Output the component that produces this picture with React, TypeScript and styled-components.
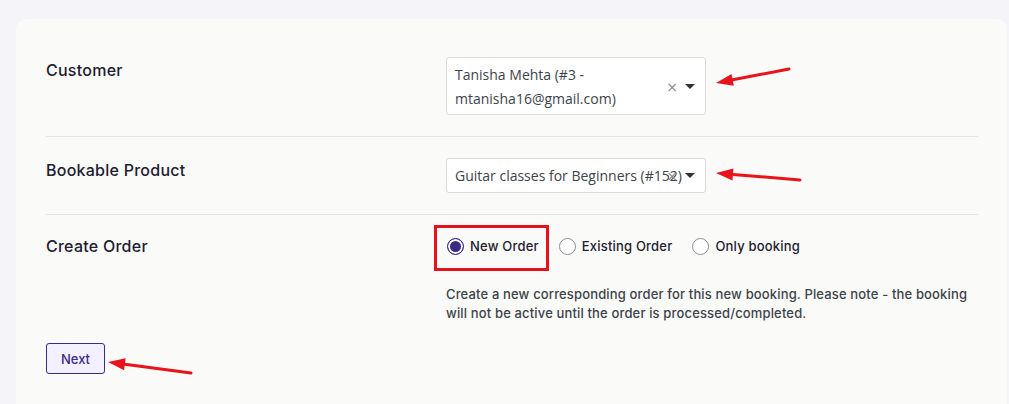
import React from 'react';
import styled, { createGlobalStyle } from 'styled-components';

const GlobalStyle = createGlobalStyle`
  html, body {
    margin: 0;
    padding: 0;
    background: #f4f4f9;
    font-family: Inter, "Noto Sans", sans-serif;
  }
`;

const Page = styled.div`
  position: relative;
  width: 1009px;
  height: 404px;
  overflow: hidden;
  padding: 19px 2px 0 16px;
  box-sizing: border-box;
`;

const Card = styled.div`
  position: relative;
  background: #fafaf9;
  border-radius: 10px 10px 0 0;
  padding: 38px 29px 40px 30px;
  min-height: 420px;
  box-sizing: border-box;
`;

const Row = styled.div<{ $last?: boolean; $top?: number; $bottom?: number }>`
  display: grid;
  grid-template-columns: 400px 1fr;
  padding: ${p => p.$top ?? 21}px 0 ${p => p.$bottom ?? 21}px;
  border-bottom: ${p => (p.$last ? 'none' : '1px solid #e4e4e4')};
`;

const Label = styled.div<{ $offset?: number }>`
  font-size: 16px;
  font-weight: 500;
  line-height: 24px;
  letter-spacing: 0.25px;
  color: #1d2030;
  padding-top: ${p => p.$offset ?? 0}px;
`;

const Field = styled.div`
  display: flex;
  flex-direction: column;
`;

const Select = styled.div<{ $height: number }>`
  position: relative;
  width: 260px;
  height: ${p => p.$height}px;
  box-sizing: border-box;
  background: #ffffff;
  border: 1px solid #dcdcde;
  border-radius: 3px;
  padding: 5px 40px 0 8px;
  font-family: "Open Sans", "Noto Sans", sans-serif;
  font-size: 14px;
  line-height: 24px;
  color: #3c434a;
  white-space: nowrap;
`;

const SelectText = styled.div`
  overflow: visible;
`;

const Clear = styled.span<{ $top: number }>`
  position: absolute;
  right: 27px;
  top: ${p => p.$top}px;
  font-family: "DejaVu Sans", sans-serif;
  font-size: 14px;
  line-height: 14px;
  color: #888;
`;

const Caret = styled.span<{ $top: number }>`
  position: absolute;
  right: 10px;
  top: ${p => p.$top}px;
  width: 0;
  height: 0;
  border-left: 5px solid transparent;
  border-right: 5px solid transparent;
  border-top: 5px solid #333;
`;

const Radios = styled.div`
  position: relative;
  display: flex;
  align-items: center;
  gap: 20px;
  height: 24px;
  padding-left: 1px;
`;

const RadioOption = styled.label`
  display: flex;
  align-items: center;
  gap: 6px;
  font-size: 13px;
  font-weight: 500;
  letter-spacing: 0.2px;
  color: #1d2030;
`;

const RadioCircle = styled.span<{ $checked?: boolean }>`
  width: 17px;
  height: 17px;
  box-sizing: border-box;
  border-radius: 50%;
  border: 1px solid ${p => (p.$checked ? '#3b2a86' : '#8c8f94')};
  background: ${p => (p.$checked ? '#3b2a86' : '#fff')};
  box-shadow: ${p => (p.$checked ? 'inset 0 0 0 2px #fff' : 'none')};
`;

const Highlight = styled.div`
  position: absolute;
  left: -12px;
  top: -9px;
  width: 115px;
  height: 46px;
  box-sizing: border-box;
  border: 3px solid #e5141c;
`;

const Description = styled.p`
  margin: 27px 0 0;
  font-size: 13px;
  font-weight: 500;
  line-height: 19px;
  letter-spacing: 0.15px;
  color: #3c434a;
  max-width: 535px;
`;

const NextButton = styled.button`
  width: 59px;
  height: 31px;
  box-sizing: border-box;
  border: 1px solid #3b2a86;
  border-radius: 3px;
  background: #f3f0ff;
  color: #3b2a86;
  font-family: Inter, sans-serif;
  font-size: 13px;
  font-weight: 500;
  padding: 0;
`;

const Arrow = styled.svg`
  position: absolute;
  left: 0;
  top: 0;
  pointer-events: none;
  overflow: visible;
`;

const arrows = [
  { x1: 789, y1: 69, x2: 716, y2: 83 },
  { x1: 800, y1: 180, x2: 716, y2: 173 },
  { x1: 191, y1: 373, x2: 108, y2: 362 },
];

const RedArrow: React.FC<{ x1: number; y1: number; x2: number; y2: number }> = ({ x1, y1, x2, y2 }) => {
  const a = Math.atan2(y2 - y1, x2 - x1);
  const len = 17;
  const w = 6;
  const bx = x2 - Math.cos(a) * len;
  const by = y2 - Math.sin(a) * len;
  const px = -Math.sin(a) * w;
  const py = Math.cos(a) * w;
  return (
    <g>
      <line x1={x1} y1={y1} x2={bx} y2={by} stroke="#e8141b" strokeWidth={3} strokeLinecap="round" />
      <polygon points={`${x2},${y2} ${bx + px},${by + py} ${bx - px},${by - py}`} fill="#e8141b" />
    </g>
  );
};

const App: React.FC = () => {
  return (
    <Page>
      <GlobalStyle />
      <Card>
        <Row $top={0}>
          <Label $offset={1}>Customer</Label>
          <Field>
            <Select $height={58}>
              <SelectText>Tanisha Mehta (#3 -</SelectText>
              <SelectText>mtanisha16@gmail.com)</SelectText>
              <Clear $top={22}>×</Clear>
              <Caret $top={26} />
            </Select>
          </Field>
        </Row>
        <Row>
          <Label>Bookable Product</Label>
          <Field>
            <Select $height={35}>
              <SelectText>Guitar classes for Beginners (#152)</SelectText>
              <Clear $top={10}>×</Clear>
              <Caret $top={14} />
            </Select>
          </Field>
        </Row>
        <Row $last $top={19} $bottom={20}>
          <Label>Create Order</Label>
          <Field>
            <Radios>
              <Highlight />
              <RadioOption>
                <RadioCircle $checked />
                New Order
              </RadioOption>
              <RadioOption>
                <RadioCircle />
                Existing Order
              </RadioOption>
              <RadioOption>
                <RadioCircle />
                Only booking
              </RadioOption>
            </Radios>
            <Description>
              Create a new corresponding order for this new booking. Please note - the booking will not be active
              until the order is processed/completed.
            </Description>
          </Field>
        </Row>
        <NextButton>Next</NextButton>
      </Card>
      <Arrow width={1009} height={404}>
        {arrows.map((ar, i) => (
          <RedArrow key={i} {...ar} />
        ))}
      </Arrow>
    </Page>
  );
};

export default App;
